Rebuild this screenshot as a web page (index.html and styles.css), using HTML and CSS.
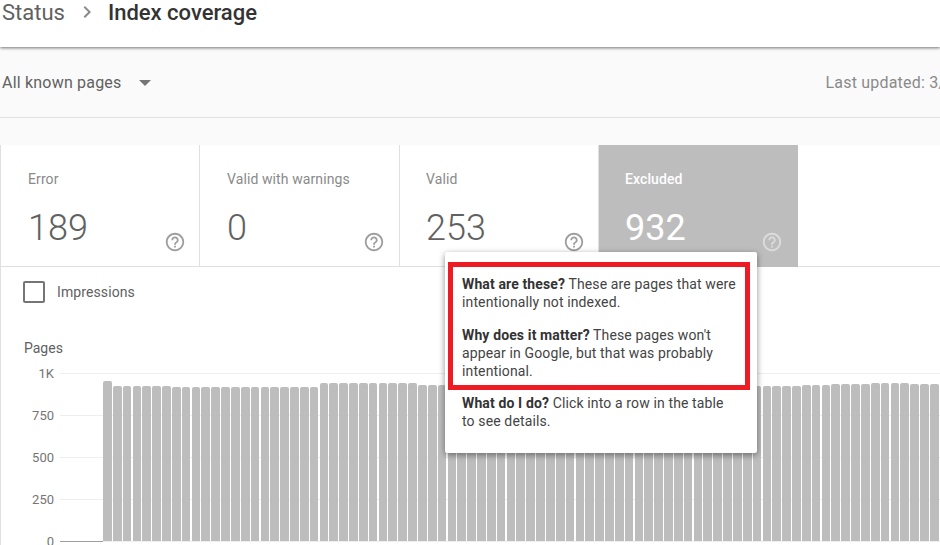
FILE: index.html
```html
<!DOCTYPE html>
<html lang="en">
<head>
    <meta charset="UTF-8">
    <meta name="viewport" content="width=device-width, initial-scale=1.0">
    <title>Index coverage</title>
    <link rel="stylesheet" href="styles.css">
</head>
<body>
    <svg class="defs" width="0" height="0">
        <symbol id="help" viewBox="0 0 24 24">
            <path d="M11 18h2v-2h-2v2zm1-16C6.48 2 2 6.48 2 12s4.48 10 10 10 10-4.48 10-10S17.52 2 12 2zm0 18c-4.41 0-8-3.59-8-8s3.59-8 8-8 8 3.59 8 8-3.59 8-8 8zm0-14c-2.21 0-4 1.79-4 4h2c0-1.1.9-2 2-2s2 .9 2 2c0 2-3 1.75-3 5h2c0-2.25 3-2.5 3-5 0-2.21-1.79-4-4-4z"/>
        </symbol>
    </svg>

    <header class="header">
        <span class="crumb">Status</span>
        <svg class="crumb-arrow" viewBox="0 0 24 24"><path d="M8.6 16.6L13.2 12 8.6 7.4 10 6l6 6-6 6z"/></svg>
        <span class="crumb-current">Index coverage</span>
    </header>

    <div class="toolbar">
        <span class="select">All known pages</span>
        <span class="select-arrow"></span>
        <span class="updated">Last updated: 3/11/19</span>
    </div>

    <main class="panel">
        <div class="cards">
            <div class="card">
                <div class="card-label">Error</div>
                <div class="card-row">
                    <span class="card-value">189</span>
                    <svg class="help"><use href="#help"/></svg>
                </div>
            </div>
            <div class="card">
                <div class="card-label">Valid with warnings</div>
                <div class="card-row">
                    <span class="card-value">0</span>
                    <svg class="help"><use href="#help"/></svg>
                </div>
            </div>
            <div class="card">
                <div class="card-label">Valid</div>
                <div class="card-row">
                    <span class="card-value">253</span>
                    <svg class="help"><use href="#help"/></svg>
                </div>
            </div>
            <div class="card card-active">
                <div class="card-label">Excluded</div>
                <div class="card-row">
                    <span class="card-value">932</span>
                    <svg class="help"><use href="#help"/></svg>
                </div>
            </div>
        </div>

        <div class="option">
            <span class="checkbox"></span>
            <span>Impressions</span>
        </div>

        <div class="chart-title">Pages</div>
        <div class="chart">
            <div class="y-axis">
                <span>1K</span>
                <span>750</span>
                <span>500</span>
                <span>250</span>
                <span>0</span>
            </div>
            <div class="plot">
                <div class="baseline"></div>
                <div id="bars" class="bars"></div>
            </div>
        </div>
    </main>

    <div class="popup">
        <p><b>What are these?</b> These are pages that were intentionally not indexed.</p>
        <p><b>Why does it matter?</b> These pages won't appear in Google, but that was probably intentional.</p>
        <p><b>What do I do?</b> Click into a row in the table to see details.</p>
        <div class="highlight"></div>
    </div>

    <script src="chart.js"></script>
</body>
</html>
```

FILE: styles.css
```css
body {
    font-family: Roboto, "Liberation Sans", sans-serif;
    margin: 0;
    width: 940px;
    height: 545px;
    overflow: hidden;
    position: relative;
    background-color: #fafafa;
    color: #616161;
}
.defs {
    position: absolute;
}
.header {
    display: flex;
    align-items: center;
    height: 47px;
    padding: 0 0 23px 2px;
    box-sizing: border-box;
    background-color: white;
    box-shadow: 0 1px 3px rgba(0, 0, 0, 0.55);
    position: relative;
    font-size: 22px;
}
.crumb {
    color: #616161;
}
.crumb-arrow {
    width: 24px;
    height: 24px;
    margin: 0 9px 0 10px;
    fill: #8a8a8a;
}
.crumb-current {
    color: #333333;
    font-weight: 500;
}
.toolbar {
    display: flex;
    align-items: center;
    height: 71px;
    padding-left: 2px;
    box-sizing: border-box;
    border-bottom: 1px solid #e0e0e0;
    font-size: 16px;
    letter-spacing: 0.2px;
    white-space: nowrap;
}
.select {
    color: #616161;
}
.select-arrow {
    flex: none;
    margin: 2px 0 0 17px;
    border-left: 6.5px solid transparent;
    border-right: 6.5px solid transparent;
    border-top: 6px solid #757575;
}
.updated {
    flex: none;
    margin-left: 675px;
    color: #8a8a8a;
}
.panel {
    margin-top: 27px;
    height: 400px;
    overflow: hidden;
    background-color: white;
    border-left: 1px solid #e0e0e0;
}
.cards {
    display: flex;
    height: 122px;
    box-sizing: border-box;
    border-bottom: 1px solid #e0e0e0;
}
.card {
    width: 199px;
    padding: 26px 13px 0 26px;
    box-sizing: border-box;
    border-right: 1px solid #e0e0e0;
    color: #757575;
}
.card:nth-child(1) {
    padding-left: 27px;
}
.card:nth-child(2) {
    width: 200px;
    padding-left: 27px;
    padding-right: 14px;
}
.card-label {
    font-size: 14px;
    line-height: 16px;
    letter-spacing: 0.1px;
    color: #8a8a8a;
}
.card-row {
    display: flex;
    justify-content: space-between;
    align-items: flex-end;
    margin-top: 18px;
}
.card-value {
    font-size: 36px;
    font-weight: 300;
    line-height: 46px;
    color: #616161;
}
.help {
    width: 22px;
    height: 22px;
    margin-bottom: -2px;
    fill: #9e9e9e;
}
.card-active {
    height: 122px;
    padding-right: 15px;
    background-color: #bdbdbd;
    border-right: none;
}
.card-active .card-label {
    color: white;
    font-weight: 500;
}
.card-active .card-value {
    color: white;
    font-weight: 400;
}
.card-active .help {
    fill: #dcdcdc;
}
.option {
    display: flex;
    align-items: center;
    gap: 12px;
    margin: 14px 0 0 22px;
    font-size: 14px;
    letter-spacing: 0.1px;
}
.checkbox {
    width: 22px;
    height: 22px;
    box-sizing: border-box;
    border: 2px solid #757575;
    border-radius: 2px;
}
.chart-title {
    margin: 37px 0 0 23px;
    font-size: 14px;
    line-height: 16px;
}
.chart {
    display: flex;
    margin-top: 17px;
}
.y-axis {
    display: flex;
    flex-direction: column;
    width: 53px;
    margin: -8px 6px 0 0;
    text-align: right;
    font-size: 13px;
    line-height: 17px;
    color: #757575;
}
.y-axis span {
    flex: none;
    height: 42px;
}
.y-axis span:last-child {
    height: 17px;
}
.plot {
    position: relative;
    display: flex;
    align-items: flex-end;
    flex: 1;
    height: 169px;
    background: repeating-linear-gradient(#eeeeee 0 1px, transparent 1px 42px);
}
.baseline {
    flex: none;
    width: 43px;
    height: 1px;
    background-color: #9e9e9e;
}
.bars {
    display: flex;
    align-items: flex-end;
    gap: 1.17px;
    height: 168px;
    margin-bottom: 1px;
}
.bar {
    flex: none;
    width: 8.7px;
    background-color: #bdbdbd;
    border-radius: 2px 2px 0 0;
}
.popup {
    position: absolute;
    left: 445px;
    top: 252px;
    width: 312px;
    height: 201px;
    padding: 23px 19px 0 17px;
    box-sizing: border-box;
    background-color: white;
    border-radius: 2px;
    box-shadow: 0 2px 6px rgba(0, 0, 0, 0.45);
    font-size: 14px;
    line-height: 18px;
    letter-spacing: 0.13px;
    color: #444444;
}
.popup p {
    margin: 0 0 15px;
}
.popup p:nth-child(2) {
    margin-bottom: 14px;
}
.popup b {
    font-weight: 700;
    color: #333333;
}
.highlight {
    position: absolute;
    left: 3px;
    top: 10px;
    width: 302px;
    height: 128px;
    box-sizing: border-box;
    border: 5px solid #ed1c24;
}
```

FILE: chart.js
```js
// daily page counts, runs of [value, how many days]
const runs = [
    [952, 1], [923, 6], [917, 15], [940, 10], [929, 34],
    [923, 5], [929, 3], [935, 4], [940, 4], [935, 3]
];

const bars = document.getElementById("bars");

for (let [value, days] of runs) {
    for (let i = 0; i < days; i++) {
        let bar = document.createElement("div");
        bar.className = "bar";
        bar.style.height = (value / 1000 * 168) + "px";
        bars.appendChild(bar);
    }
}
```
